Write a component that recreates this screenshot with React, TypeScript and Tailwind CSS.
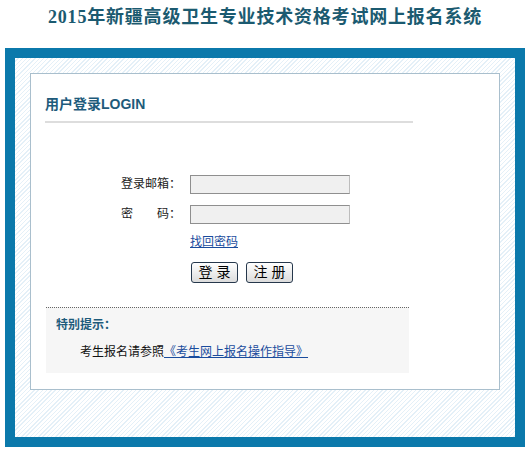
import React from 'react';

const App: React.FC = () => {
  return (
    <div className="w-[530px] h-[450px] bg-white overflow-hidden font-['Liberation_Sans','Noto_Sans_CJK_SC',sans-serif] text-[12px] text-[#222]">
      {/* Page title */}
      <h1 className="h-[48px] pt-[5px] text-center text-[18px] leading-[24px] font-bold tracking-[0.8px] text-[#1b5a70] font-['Liberation_Serif','Noto_Sans_CJK_SC',serif]">
        2015年新疆高级卫生专业技术资格考试网上报名系统
      </h1>

      {/* Blue frame with hatched background */}
      <div className="ml-[5px] w-[520px] h-[399px] border-[10px] border-[#0b79ab] bg-[repeating-linear-gradient(135deg,#ffffff_0px,#ffffff_2px,#e4f0f8_2px,#e4f0f8_3px)] p-[15px]">
        <div className="h-[317px] border border-[#a9bfcd] bg-white px-[14px] pt-[20px]">
          <div className="h-[20px] leading-[20px] text-[14px] font-bold text-[#1e5b7b]">用户登录LOGIN</div>
          <div className="mt-[7px] w-[368px] h-[2px] bg-[#dddddd]" />

          {/* Login form */}
          <div className="mt-[52px] pl-[76px]">
            <div className="flex items-center h-[19px]">
              <span className="w-[60px] leading-[19px]">登录邮箱：</span>
              <input className="ml-[9px] w-[160px] h-[19px] border border-t-[#8f8f8f] border-l-[#8f8f8f] border-r-[#bdbdbd] border-b-[#8f8f8f] bg-[#f0f0f0] outline-none" />
            </div>
            <div className="mt-[11px] flex items-center h-[19px]">
              <span className="w-[60px] leading-[19px]">密　　码：</span>
              <input type="password" className="ml-[9px] w-[160px] h-[19px] border border-t-[#8f8f8f] border-l-[#8f8f8f] border-r-[#bdbdbd] border-b-[#8f8f8f] bg-[#f0f0f0] outline-none" />
            </div>
            <div className="mt-[11px] pl-[69px] leading-[14px]">
              <a href="#" className="text-[#1a4c9d] underline">找回密码</a>
            </div>
            <div className="mt-[13px] pl-[70px] flex gap-[8px]">
              <button className="w-[47px] h-[21px] rounded-[3px] border border-[#26384c] bg-gradient-to-b from-white to-[#dcdcdc] text-[14px] leading-[19px] text-black">
                登 录
              </button>
              <button className="w-[47px] h-[21px] rounded-[3px] border border-[#26384c] bg-gradient-to-b from-white to-[#dcdcdc] text-[14px] leading-[19px] text-black">
                注 册
              </button>
            </div>
          </div>

          {/* Notice box */}
          <div className="mt-[24px] ml-[1px] w-[363px] h-[66px] border-t border-dotted border-[#666666] bg-[#f6f6f6] pl-[10px] pt-[9px]">
            <div className="leading-[16px] font-bold text-[#1e5b7b]">特别提示：</div>
            <div className="mt-[11px] ml-[24px] leading-[16px] text-[#111]">
              考生报名请参照
              <a href="#" className="text-[#1a4c9d] underline">《考生网上报名操作指导》</a>
            </div>
          </div>
        </div>
      </div>
    </div>
  );
};

export default App;
